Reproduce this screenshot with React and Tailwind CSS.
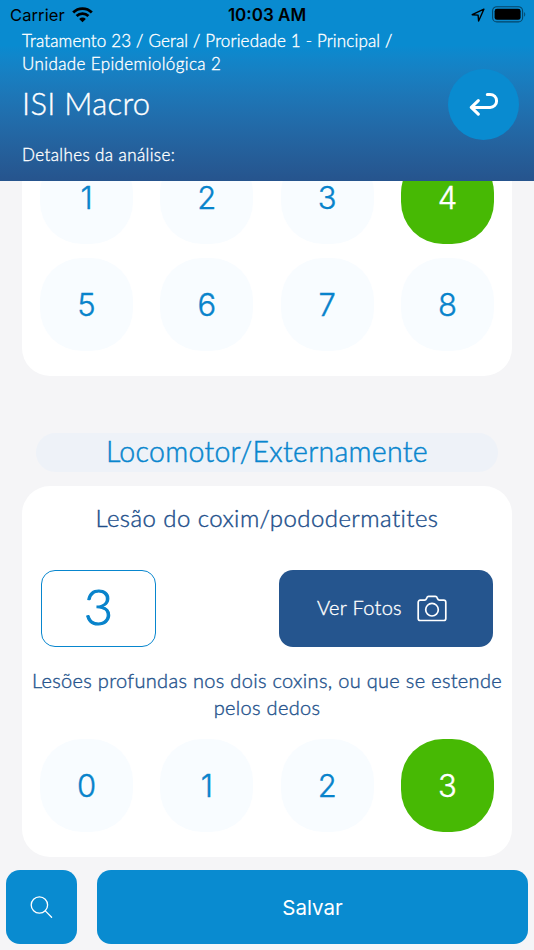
import React from "react";

const rounded = "font-['Lato','Open_Sans',sans-serif]";
const system = "font-['Inter','Liberation_Sans',sans-serif]";

function WifiIcon() {
  return (
    <svg className="h-4 w-[21px]" viewBox="0 0 21 16" fill="none" stroke="#000" strokeWidth="2.8">
      <path d="M1.2 5.5a13.2 13.2 0 0 1 18.6 0" />
      <path d="M4.6 9a8.4 8.4 0 0 1 11.8 0" />
      <path d="M10.5 15.2 7.2 12a4.6 4.6 0 0 1 6.6 0z" fill="#000" stroke="none" />
    </svg>
  );
}

function LocationIcon() {
  return (
    <svg className="h-[14px] w-[14px]" viewBox="0 0 14 14" fill="none" stroke="#000" strokeWidth="1.4" strokeLinejoin="round">
      <path d="M12.9 1.2 1.2 6.7l5.9.4.5 5.9z" />
    </svg>
  );
}

function BatteryIcon() {
  return (
    <svg className="-mt-px h-[17px] w-[34px]" viewBox="0 0 34 17" fill="none">
      <rect x="0.6" y="0.7" width="30" height="15.2" rx="4.2" stroke="#000" strokeOpacity="0.5" strokeWidth="1.1" />
      <rect x="2.6" y="2.8" width="26" height="11" rx="2.4" fill="#000" />
      <path d="M32.2 6v4.8c1.4-.8 1.4-4 0-4.8z" fill="#000" fillOpacity="0.5" />
    </svg>
  );
}

function ReturnIcon() {
  return (
    <svg className="-mt-[2px] h-6 w-[30px]" viewBox="0 0 30 24" fill="none" stroke="#fff" strokeWidth="3" strokeLinecap="round" strokeLinejoin="round">
      <path d="M18.3 2.4h2.8a6.5 6.5 0 0 1 0 13H3" />
      <path d="M9.3 8.6 2.3 15.4l7 6.8" />
    </svg>
  );
}

function CameraIcon() {
  return (
    <svg className="mt-px h-[27px] w-[30px]" viewBox="0 0 30 27" fill="none" stroke="#fff" strokeWidth="1.7" strokeLinejoin="round">
      <path d="M3.3 5.2h4.3c1 0 1.5-.5 1.8-1.4l.5-1.2c.3-.9.9-1.3 1.7-1.3h6.8c.8 0 1.4.4 1.7 1.3l.5 1.2c.3.9.8 1.4 1.8 1.4h4.3c1.3 0 2.1.8 2.1 2.1v16.1c0 1.3-.8 2.1-2.1 2.1H3.3C2 25.5 1.2 24.7 1.2 23.4V7.300C1.2 6 2 5.200 3.300 5.200z" />
      <circle cx="15" cy="14.7" r="6.3" />
    </svg>
  );
}

function SearchIcon() {
  return (
    <svg className="h-[23px] w-[23px]" viewBox="0 0 23 23" fill="none" stroke="#fff" strokeWidth="1.3" strokeLinecap="round">
      <circle cx="9.4" cy="9" r="8.2" />
      <path d="m15.3 14.9 6.3 6.3" />
    </svg>
  );
}

function ScoreGrid({ values, selected }) {
  return (
    <div className="grid grid-cols-[repeat(4,93px)] justify-between gap-y-[14px]">
      {values.map((value) => (
        <button
          key={value}
          className={
            "flex h-[93px] items-center justify-center rounded-[42px] pt-[1px] text-[31px] leading-[28px] font-light [-webkit-text-stroke:0.4px] " +
            system +
            (value === selected ? " bg-[#47b904] text-white" : " bg-[#f8fcff] text-[#0883cb]")
          }
        >
          {value}
        </button>
      ))}
    </div>
  );
}

export default function App() {
  return (
    <div className={"flex h-[950px] w-[534px] flex-col overflow-hidden bg-[#f5f5f7] " + rounded}>
      <header className="h-[181px] shrink-0 bg-linear-to-b from-[#098bd0] from-25% to-[#26548d] text-white">
        <div className={"grid h-[30px] grid-cols-3 items-center pr-[8px] pl-[10px] text-black " + system}>
          <div className="flex items-center gap-[7px] text-[16.5px]">
            <span className="tracking-[0.1px]">Carrier</span>
            <WifiIcon />
          </div>
          <div className="-ml-[2px] pt-px text-center text-[17px] font-semibold whitespace-nowrap">10:03 AM</div>
          <div className="flex items-center justify-end gap-[7px]">
            <LocationIcon />
            <BatteryIcon />
          </div>
        </div>
        <div className="flex justify-between pr-[15px] pl-[22px]">
          <div className="-mt-px font-light whitespace-nowrap [-webkit-text-stroke:0.35px]">
            <p className="text-[17px] leading-[23px] tracking-[0.16px]">
              Tratamento 23 / Geral / Proriedade 1 - Principal /
              <br />
              <span className="tracking-[0.38px]">Unidade Epidemiológica 2</span>
            </p>
            <h1 className="mt-[7px] text-[31px] leading-[42px] tracking-[0.3px]">ISI Macro</h1>
            <p className="mt-[19px] text-[17px] leading-[23px] tracking-[0.4px]">Detalhes da análise:</p>
          </div>
          <button className="mt-[39px] flex h-[71px] w-[71px] items-center justify-center rounded-full bg-[#098bd0]">
            <ReturnIcon />
          </button>
        </div>
      </header>

      <main className="h-[689px] shrink-0 overflow-hidden px-[22px]">
        <section className="-mt-[30.5px] rounded-b-[28px] bg-white px-[18px] pb-[25.5px]">
          <ScoreGrid values={[1, 2, 3, 4, 5, 6, 7, 8]} selected={4} />
        </section>

        <h2 className="mx-[14px] mt-[57px] flex h-[39px] items-center justify-center rounded-full bg-[#eef2f8] pb-[2px] text-[28.5px] font-light tracking-[0.3px] text-[#0886ce] [-webkit-text-stroke:0.5px]">
          Locomotor/Externamente
        </h2>

        <section className="mt-[14px] h-[371px] rounded-[28px] bg-white px-[18px] pt-4">
          <h3 className="text-center text-[24px] leading-8 font-light tracking-[0.42px] text-[#204e8a] [-webkit-text-stroke:0.4px]">
            Lesão do coxim/pododermatites
          </h3>
          <div className="mt-[35.5px] flex justify-between pr-px pl-px">
            <div className="flex h-[77px] w-[115px] items-center justify-center rounded-[14px] border-[1.5px] border-[#0886ce] pb-[3px] text-[50px] font-light text-[#0883cb] [-webkit-text-stroke:1.2px]">
              3
            </div>
            <button className="flex h-[77px] w-[214px] items-center justify-center gap-[15px] rounded-[14px] bg-[#25558e] pr-[8px] text-[20px] font-light tracking-[0.3px] text-white">
              <span className="-mt-[2px] [-webkit-text-stroke:0.35px]">Ver Fotos</span>
              <CameraIcon />
            </button>
          </div>
          <p className="-mx-[14px] mt-[20px] mb-[18.5px] text-center text-[20px] leading-[27px] font-light tracking-[0.32px] whitespace-nowrap text-[#26548d] [-webkit-text-stroke:0.4px]">
            Lesões profundas nos dois coxins, ou que se estende
            <br />
            pelos dedos
          </p>
          <ScoreGrid values={[0, 1, 2, 3]} selected={3} />
        </section>
      </main>

      <footer className="flex h-[80px] gap-5 px-[6px] pb-[6px]">
        <button className="flex h-[74px] w-[71px] items-center justify-center rounded-[14px] bg-[#098bd0]">
          <SearchIcon />
        </button>
        <button className={"h-[74px] flex-1 rounded-[14px] bg-[#098bd0] pt-[2px] text-[20.5px] text-white " + system}>
          Salvar
        </button>
      </footer>
    </div>
  );
}
